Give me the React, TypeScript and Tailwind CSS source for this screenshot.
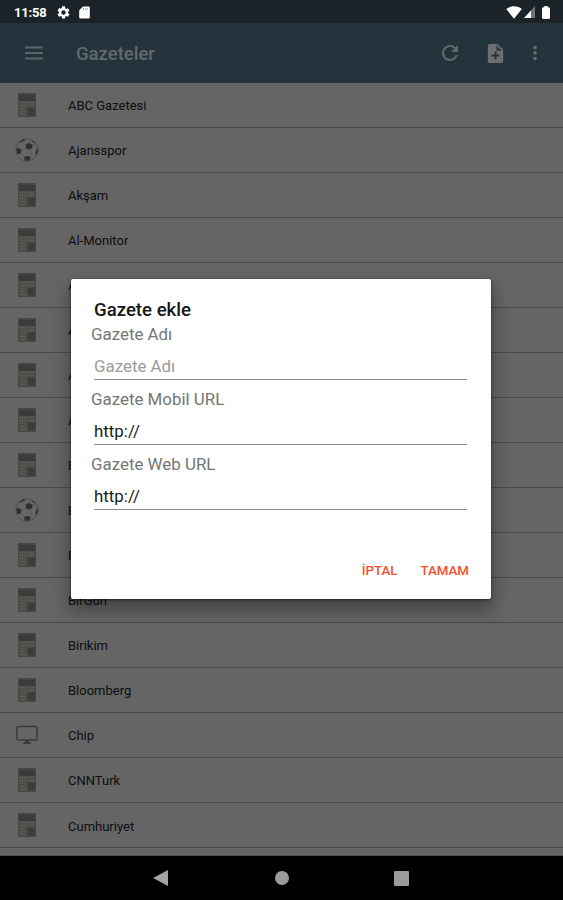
import React from "react";

type Kind = "news" | "ball" | "screen";

const papers: { name: string; kind: Kind }[] = [
  { name: "ABC Gazetesi", kind: "news" },
  { name: "Ajansspor", kind: "ball" },
  { name: "Akşam", kind: "news" },
  { name: "Al-Monitor", kind: "news" },
  { name: "A", kind: "news" },
  { name: "A", kind: "news" },
  { name: "A", kind: "news" },
  { name: "A", kind: "news" },
  { name: "B", kind: "news" },
  { name: "B", kind: "ball" },
  { name: "B", kind: "news" },
  { name: "BirGün", kind: "news" },
  { name: "Birikim", kind: "news" },
  { name: "Bloomberg", kind: "news" },
  { name: "Chip", kind: "screen" },
  { name: "CNNTurk", kind: "news" },
  { name: "Cumhuriyet", kind: "news" },
];

function NewsIcon() {
  return (
    <svg width="18" height="24" viewBox="0 0 18 24">
      <rect width="18" height="24" fill="#474643" />
      <rect x="1" y="1" width="16" height="22" fill="#504e4a" />
      <rect x="1" y="1.5" width="16" height="6.5" fill="#3b3b3b" />
      <path d="M1 9.3h16" stroke="#5a5851" strokeWidth="1.2" />
      <path d="M2 12.5h6M10 12.5h6M2 15.5h5M2 18.5h5M2 21.5h6" stroke="#5b5851" strokeWidth="1" />
      <rect x="9.5" y="14.5" width="7.5" height="8" fill="#3d3c3a" />
    </svg>
  );
}

function BallIcon() {
  return (
    <svg width="24" height="24" viewBox="0 0 24 24">
      <circle cx="12" cy="12" r="11.2" fill="#676767" stroke="#4c4c4c" strokeWidth="0.9" />
      <g fill="#303030">
        <path d="M10.7 6.6 13.5 5l4 1.5-.3 3.5-3 1.5-3-1z" />
        <path d="M1.2 11 3.5 9.5l2.7 2.3-.3 3.7-3.3.8A11 11 0 0 1 1.2 11z" />
        <path d="m8.5 19.5 3.4-1.7 3.8.9-.6 3.3a12 12 0 0 1-5 .6z" />
        <path d="m4.8 3.4 3.6-2.2 2.3.2-2.2 1.8-3.5 1.2z" />
        <path d="m21.3 11.5 1.8-.4a11 11 0 0 1-1.5 5.2l-1.4.1z" />
        <path d="m17.3 2.2 3.4 3.2-1.7-.4-2.4-2.1z" />
      </g>
      <path d="M8.4 3.4 10.7 6.6M13.5 5l3.1-2.1M17.5 6.5l2.5.8 1.3 4.2M11.2 10.5 6.2 11.8M14.2 11.5l2.4 4.7-.9 2.5M5.9 15.5 8.5 19.5" fill="none" stroke="#4f4f4f" strokeWidth="0.6" />
    </svg>
  );
}

function ScreenIcon() {
  return (
    <svg width="22" height="20" viewBox="0 0 22 20">
      <rect x="1" y="1.5" width="20" height="13.5" rx="1" fill="none" stroke="#3b3b3b" strokeWidth="1.5" />
      <path d="M9.5 15h3l1 2.5h1.3V19H7.2v-1.5h1.3z" fill="#3b3b3b" />
    </svg>
  );
}

function RowIcon({ kind }: { kind: Kind }) {
  if (kind === "ball") return <BallIcon />;
  if (kind === "screen") return <ScreenIcon />;
  return <NewsIcon />;
}

function StatusBar() {
  return (
    <div className="flex h-[23px] items-center bg-[#1b2328] pl-[14px] pr-[13px] pt-[1px] text-white">
      <span className="w-[33px] text-[13px] font-bold leading-none tracking-[-0.2px]">11:58</span>
      <svg className="ml-[9px]" width="15" height="15" viewBox="0 0 24 24" fill="#fff">
        <path d="M19.14 12.94c.04-.3.06-.61.06-.94s-.02-.64-.07-.94l2.03-1.58a.49.49 0 0 0 .12-.61l-1.92-3.32a.49.49 0 0 0-.59-.22l-2.39.96c-.5-.38-1.03-.7-1.62-.94l-.36-2.54A.48.48 0 0 0 13.92 2h-3.84c-.24 0-.43.17-.47.41l-.36 2.54c-.59.24-1.13.57-1.62.94l-2.39-.96a.49.49 0 0 0-.59.22L2.74 8.87c-.12.21-.08.47.12.61l2.03 1.58c-.05.3-.09.63-.09.94s.02.64.07.94l-2.03 1.58a.49.49 0 0 0-.12.61l1.92 3.32c.12.22.37.29.59.22l2.39-.96c.5.38 1.03.7 1.62.94l.36 2.54c.05.24.24.41.48.41h3.84c.24 0 .44-.17.47-.41l.36-2.54c.59-.24 1.13-.56 1.62-.94l2.39.96c.22.08.47 0 .59-.22l1.92-3.32a.49.49 0 0 0-.12-.61zM12 15.6a3.6 3.6 0 1 1 0-7.2 3.6 3.6 0 0 1 0 7.2z" />
      </svg>
      <svg className="ml-2" width="11" height="13" viewBox="0 0 11 13" fill="#fff">
        <path d="M4 .5h5.5a1.3 1.3 0 0 1 1.3 1.3v9.4a1.3 1.3 0 0 1-1.3 1.3h-8A1.3 1.3 0 0 1 .2 11.2V4.3z" />
        <path d="M4.5 2v2M6.4 2v2M8.3 2v2" stroke="#9a9a9a" strokeWidth="0.8" />
      </svg>
      <div className="ml-auto flex items-center">
        <svg width="16" height="13" viewBox="0 0 16 13" fill="#fff">
          <path d="M8 12.7.2 3.1C2.3 1.3 5 .3 8 .3s5.7 1 7.8 2.8z" />
        </svg>
        <svg className="ml-[2px]" width="11" height="12" viewBox="0 0 11 12">
          <path d="M11 0v12H0z" fill="#6d7377" />
          <path d="M7 4.4V12H0z" fill="#fff" />
        </svg>
        <svg className="ml-[7px]" width="8" height="13" viewBox="0 0 8 13" fill="#fff">
          <path d="M2.3 0h3.4v1.3H7l1 1V12l-1 1H1l-1-1V2.3l1-1h1.3z" />
        </svg>
      </div>
    </div>
  );
}

function AppBar() {
  return (
    <div className="flex h-[60px] items-center bg-[#25333c] pl-[25px] pr-[26px]">
      <svg width="18" height="14" viewBox="0 0 18 14" fill="#5d6367">
        <path d="M0 .5h18v2H0zM0 6h18v2H0zM0 11.5h18v2H0z" />
      </svg>
      <span className="ml-[33px] pt-[3px] text-[18.5px] font-medium text-[#63686b]">Gazeteler</span>
      <svg className="ml-auto" width="24" height="24" viewBox="0 0 24 24" fill="#63686b">
        <path d="M17.65 6.35A7.96 7.96 0 0 0 12 4a8 8 0 1 0 7.73 10h-2.08A6 6 0 1 1 12 6c1.66 0 3.14.69 4.22 1.78L13 11h7V4z" />
      </svg>
      <svg className="ml-[22px]" width="23" height="23" viewBox="0 0 24 24" fill="#6b6f71">
        <path d="M14 2H6a2 2 0 0 0-2 2v16c0 1.1.9 2 2 2h12a2 2 0 0 0 2-2V8zm2 13h-3v3h-2v-3H8v-2h3v-3h2v3h3zm-3-6V3.5L18.5 9z" />
      </svg>
      <svg className="ml-[26px]" width="4" height="16" viewBox="0 0 4 16" fill="#6b6f71">
        <circle cx="2" cy="2.5" r="1.8" />
        <circle cx="2" cy="8" r="1.8" />
        <circle cx="2" cy="13.5" r="1.8" />
      </svg>
    </div>
  );
}

function Field({ label, value, hint }: { label: string; value: string; hint?: boolean }) {
  return (
    <div className="flex h-[65.3px] flex-col">
      <div className="h-[20px] pl-5 text-[16.9px] leading-[20px] text-[#757575]">{label}</div>
      <div
        className={
          "ml-[23px] mr-[24px] mt-[9px] h-[27px] border-b border-[#8c8c8c] text-[16.9px] leading-[27px] " +
          (hint ? "text-[#9b9b9b]" : "text-[#1c1c1c]")
        }
      >
        {value}
      </div>
    </div>
  );
}

function Dialog() {
  return (
    <div className="absolute left-[71px] top-[279px] flex h-[320px] w-[420px] flex-col rounded-[2px] bg-white pt-[18.5px] shadow-[0_10px_18px_2px_rgba(0,0,0,0.32),0_1px_3px_rgba(0,0,0,0.5)]">
      <div className="h-[26px] pl-[23px] text-[18.6px] font-medium leading-[24px] text-[#161616]">Gazete ekle</div>
      <Field label="Gazete Adı" value="Gazete Adı" hint />
      <Field label="Gazete Mobil URL" value="http://" />
      <Field label="Gazete Web URL" value="http://" />
      <div className="mt-[42.5px] flex justify-end gap-[23px] pr-[22px] text-[13.3px] font-medium leading-[18px] text-[#f4502f]">
        <span>İPTAL</span>
        <span>TAMAM</span>
      </div>
    </div>
  );
}

function NavBar() {
  return (
    <div className="flex h-[44px] items-center bg-black pl-[153px]">
      <svg width="15" height="16" viewBox="0 0 15 16">
        <path d="M15 0v16L0 8z" fill="#a3a3a3" />
      </svg>
      <div className="ml-[107px] h-[14px] w-[14px] rounded-full bg-[#9b9b9b]" />
      <div className="ml-[105px] h-[15px] w-[15px] rounded-[1px] bg-[#9b9b9b]" />
    </div>
  );
}

export default function App() {
  return (
    <div className="relative flex h-[900px] w-[563px] flex-col overflow-hidden bg-[#656565] font-[Roboto,sans-serif]">
      <StatusBar />
      <AppBar />
      <div className="h-[773px] shrink-0 overflow-hidden border-b border-[#505050]">
        {papers.map((p, i) => (
          <div key={i} className="flex h-[45.03px] items-center border-b border-[#4a4a4a]">
            <div className="flex w-[53px] justify-center">
              <RowIcon kind={p.kind} />
            </div>
            <span className="ml-[15px] pt-[2px] text-[13px] text-[#0d0d0d]">{p.name}</span>
          </div>
        ))}
      </div>
      <NavBar />
      <Dialog />
    </div>
  );
}
